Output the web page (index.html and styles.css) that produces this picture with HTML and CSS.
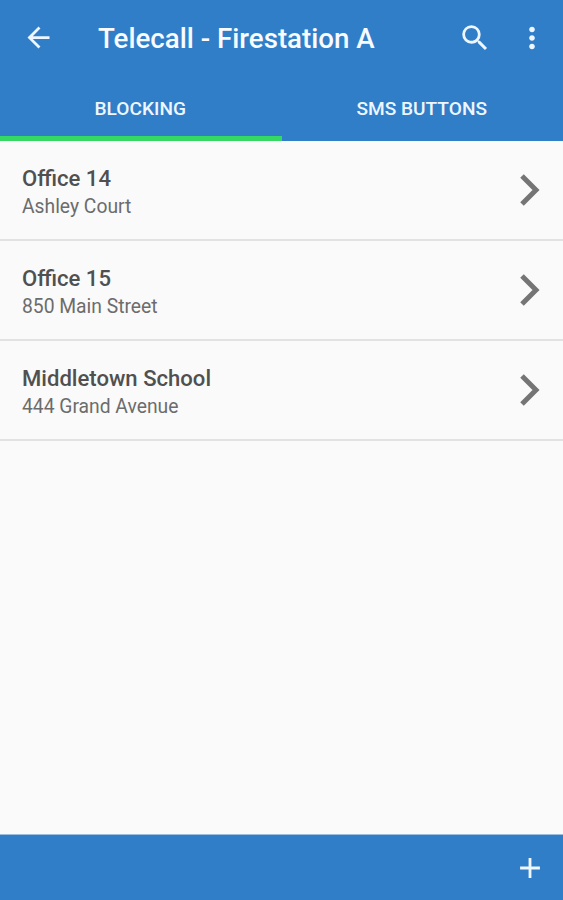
FILE: index.html
```html
<!DOCTYPE html>
<html lang="en">
<head>
    <meta charset="UTF-8">
    <meta name="viewport" content="width=device-width, initial-scale=1.0">
    <title>Telecall - Firestation A</title>
    <link rel="stylesheet" href="styles.css">
</head>
<body>
    <header class="header">
        <div class="toolbar">
            <svg class="icon back" viewBox="0 0 24 24"><path d="M20 11H7.83l5.59-5.59L12 4l-8 8 8 8 1.41-1.41L7.83 13H20v-2z"/></svg>
            <h1>Telecall - Firestation A</h1>
            <svg class="icon search" viewBox="0 0 24 24"><path d="M15.5 14h-.79l-.28-.27A6.47 6.47 0 0 0 16 9.5 6.5 6.5 0 1 0 9.5 16c1.61 0 3.09-.59 4.23-1.57l.27.28v.79l5 4.99L20.49 19l-4.99-5zm-6 0C7.01 14 5 11.99 5 9.5S7.01 5 9.5 5 14 7.01 14 9.5 11.99 14 9.5 14z"/></svg>
            <svg class="icon more" viewBox="0 0 24 24"><path d="M12 8c1.1 0 2-.9 2-2s-.9-2-2-2-2 .9-2 2 .9 2 2 2zm0 2c-1.1 0-2 .9-2 2s.9 2 2 2 2-.9 2-2-.9-2-2-2zm0 6c-1.1 0-2 .9-2 2s.9 2 2 2 2-.9 2-2-.9-2-2-2z"/></svg>
        </div>
        <nav class="tabs">
            <a class="tab active"><span>BLOCKING</span></a>
            <a class="tab"><span>SMS BUTTONS</span></a>
        </nav>
    </header>

    <main class="list">
        <div class="item">
            <div class="info">
                <h2>Office 14</h2>
                <p>Ashley Court</p>
            </div>
            <svg class="chevron" viewBox="0 0 22 34"><path d="M3 3l14 14L3 31"/></svg>
        </div>
        <div class="item">
            <div class="info">
                <h2>Office 15</h2>
                <p>850 Main Street</p>
            </div>
            <svg class="chevron" viewBox="0 0 22 34"><path d="M3 3l14 14L3 31"/></svg>
        </div>
        <div class="item">
            <div class="info">
                <h2>Middletown School</h2>
                <p>444 Grand Avenue</p>
            </div>
            <svg class="chevron" viewBox="0 0 22 34"><path d="M3 3l14 14L3 31"/></svg>
        </div>
    </main>

    <footer class="footer">
        <svg class="icon add" viewBox="0 0 24 24"><path d="M19 13h-6v6h-2v-6H5v-2h6V5h2v6h6v2z"/></svg>
    </footer>
</body>
</html>
```
FILE: styles.css
```css
* {
    box-sizing: border-box;
}
body {
    margin: 0;
    height: 100vh;
    display: flex;
    flex-direction: column;
    font-family: Roboto, sans-serif;
    background-color: #fafafa;
}
h1, h2, p {
    margin: 0;
}
.header {
    height: 141px;
    background-color: #317ec8;
    color: #f8fbff;
}
.toolbar {
    height: 75px;
    padding: 0 14px 0 22px;
    display: flex;
    align-items: center;
}
.toolbar h1 {
    flex: 1;
    margin-left: 43px;
    padding-top: 3px;
    font-size: 27.7px;
    font-weight: 500;
    line-height: 32px;
    white-space: nowrap;
}
.icon {
    flex: none;
    display: block;
    width: 34px;
    height: 34px;
    fill: #eef6ff;
}
.back {
    width: 33px;
    height: 33px;
}
.more {
    margin-left: 23px;
}
.tabs {
    height: 66px;
    display: flex;
}
.tab {
    flex: 1;
    display: flex;
    justify-content: center;
    padding: 22px 1px 0 0;
    border-bottom: 5px solid transparent;
    font-size: 19.1px;
    font-weight: 500;
    line-height: 24px;
}
.tab span {
    color: #eef6ff;
}
.tab.active {
    border-bottom-color: #35d863;
}
.list {
    flex: 1;
}
.item {
    height: 100px;
    padding: 0 22px;
    display: flex;
    align-items: center;
    justify-content: space-between;
    border-bottom: 2px solid #e2e2e2;
}
.info {
    padding-top: 6px;
}
.info h2 {
    color: #505050;
    font-size: 22.1px;
    font-weight: 500;
    line-height: 27px;
}
.info p {
    color: #6c6c6c;
    font-size: 19.3px;
    line-height: 29px;
}
.chevron {
    width: 22px;
    height: 34px;
    fill: none;
    stroke: #757575;
    stroke-width: 5;
}
.footer {
    height: 66px;
    padding-right: 16px;
    display: flex;
    align-items: center;
    justify-content: flex-end;
    border-top: 1px solid #9dbfe2;
    background-color: #317ec8;
}
```
